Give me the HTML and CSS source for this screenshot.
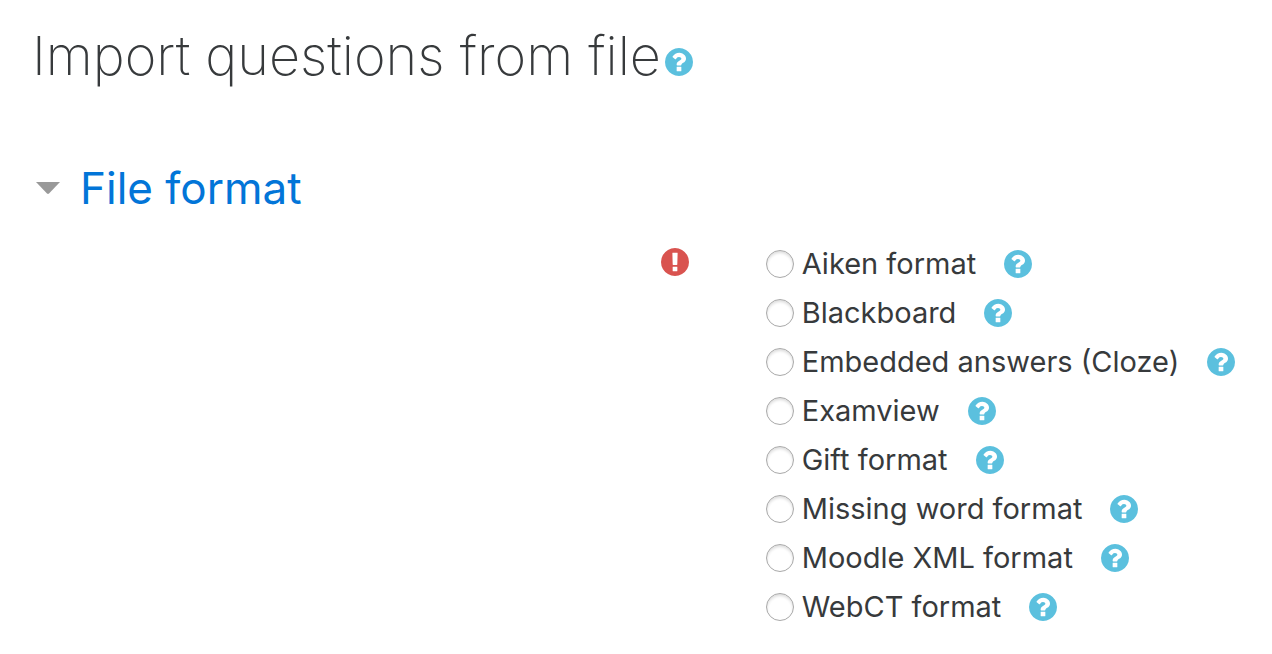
FILE: index.html
```html
<!DOCTYPE html>
<html lang="en">
<head>
    <meta charset="UTF-8">
    <meta name="viewport" content="width=device-width, initial-scale=1.0">
    <title>Import questions from file</title>
    <link rel="stylesheet" href="styles.css">
</head>
<body>
    <svg class="sprite" aria-hidden="true">
        <symbol id="icon-help" viewBox="128 128 1536 1536">
            <path d="M1024 1376v-192q0-14-9-23t-23-9h-192q-14 0-23 9t-9 23v192q0 14 9 23t23 9h192q14 0 23-9t9-23zm256-672q0-88-55.5-163t-138.5-116-170-41q-243 0-371 213-15 24 8 42l132 100q7 6 19 6 16 0 25-12 53-68 86-92 34-24 86-24 48 0 85.5 26t37.5 59q0 38-20 61t-68 45q-63 28-115.5 86.5t-52.5 125.5v36q0 14 9 23t23 9h192q14 0 23-9t9-23q0-19 21.5-49.5t54.5-49.5q32-18 49-28.5t46-35 44.5-48 28-60.5 12.5-81zm384 192q0 209-103 385.5t-279.5 279.5-385.5 103-385.5-103-279.5-279.5-103-385.5 103-385.5 279.5-279.5 385.5-103 385.5 103 279.5 279.5 103 385.5z"/>
        </symbol>
    </svg>

    <header class="page-header">
        <h1>Import questions from file</h1>
        <button type="button" class="help" aria-label="Help with importing questions"><svg><use href="#icon-help"/></svg></button>
    </header>

    <form>
        <h2 class="section-title">
            <svg class="caret" viewBox="0 0 24 12" aria-hidden="true"><path d="M0 0h24L13 11.500q-1 .8-2 0z"/></svg>
            <a href="#file-format">File format</a>
        </h2>

        <div class="form-row" id="file-format">
            <div class="required">
                <svg viewBox="128 128 1536 1536" role="img" aria-label="Required"><path d="M896 128q209 0 385.5 103t279.5 279.5 103 385.5-103 385.5-279.5 279.5-385.5 103-385.5-103-279.5-279.5-103-385.5 103-385.5 279.5-279.5 385.5-103zm128 1247v-190q0-14-9-23.5t-22-9.5h-192q-13 0-23 10t-10 23v190q0 13 10 23t23 10h192q13 0 22-9.5t9-23.5zm-2-344l18-621q0-12-10-18-10-8-24-8h-220q-14 0-24 8-10 6-10 18l17 621q0 10 10 17.500t24 7.500h185q14 0 23.500-7.500t10.500-17.500z"/></svg>
            </div>
            <div class="options" role="radiogroup" aria-label="File format">
                <div class="option">
                    <label><input type="radio" name="format" value="aiken">Aiken format</label>
                    <button type="button" class="help" aria-label="Help with Aiken format"><svg><use href="#icon-help"/></svg></button>
                </div>
                <div class="option">
                    <label><input type="radio" name="format" value="blackboard">Blackboard</label>
                    <button type="button" class="help" aria-label="Help with Blackboard"><svg><use href="#icon-help"/></svg></button>
                </div>
                <div class="option">
                    <label><input type="radio" name="format" value="cloze">Embedded answers (Cloze)</label>
                    <button type="button" class="help" aria-label="Help with Embedded answers (Cloze)"><svg><use href="#icon-help"/></svg></button>
                </div>
                <div class="option">
                    <label><input type="radio" name="format" value="examview">Examview</label>
                    <button type="button" class="help" aria-label="Help with Examview"><svg><use href="#icon-help"/></svg></button>
                </div>
                <div class="option">
                    <label><input type="radio" name="format" value="gift">Gift format</label>
                    <button type="button" class="help" aria-label="Help with Gift format"><svg><use href="#icon-help"/></svg></button>
                </div>
                <div class="option">
                    <label><input type="radio" name="format" value="missingword">Missing word format</label>
                    <button type="button" class="help" aria-label="Help with Missing word format"><svg><use href="#icon-help"/></svg></button>
                </div>
                <div class="option">
                    <label><input type="radio" name="format" value="xml">Moodle XML format</label>
                    <button type="button" class="help" aria-label="Help with Moodle XML format"><svg><use href="#icon-help"/></svg></button>
                </div>
                <div class="option">
                    <label><input type="radio" name="format" value="webct">WebCT format</label>
                    <button type="button" class="help" aria-label="Help with WebCT format"><svg><use href="#icon-help"/></svg></button>
                </div>
            </div>
        </div>
    </form>
</body>
</html>
```
FILE: styles.css
```css
* {
    box-sizing: border-box;
}
body {
    margin: 0;
    padding: 20px 32px;
    font-family: Inter, "Liberation Sans", sans-serif;
    font-size: 29px;
    color: #373a3c;
    background: #fff;
}
.sprite {
    display: none;
}
.page-header {
    display: flex;
    align-items: center;
    gap: 4px;
}
h1 {
    margin: 0;
    font-size: 54px;
    font-weight: 200;
    line-height: 72px;
}
.help {
    flex: none;
    width: 28px;
    height: 28px;
    padding: 0;
    border: none;
    background: none;
    color: #5bc0de;
    cursor: pointer;
}
.help svg,
.required svg {
    display: block;
    width: 28px;
    height: 28px;
    fill: currentColor;
}
.page-header .help {
    margin-top: 12px;
}
.section-title {
    display: flex;
    align-items: center;
    gap: 20px;
    margin: 68px 0 23px;
    padding-left: 4px;
    font-size: 44px;
    font-weight: 400;
    line-height: 56px;
}
.section-title a {
    color: #0275d8;
    text-decoration: none;
}
.caret {
    width: 24px;
    height: 12px;
    fill: #999;
}
.form-row {
    display: grid;
    grid-template-columns: 18fr 13fr;
    gap: 77px;
}
.required {
    display: flex;
    justify-content: flex-end;
    padding-top: 9px;
    color: #d9534f;
}
.option {
    display: flex;
    align-items: center;
    gap: 28px;
    height: 49px;
    white-space: nowrap;
}
.option label {
    display: flex;
    align-items: center;
    gap: 8px;
}
input[type="radio"] {
    appearance: none;
    width: 28px;
    height: 28px;
    margin: 0;
    border: 1px solid #a9a9a9;
    border-radius: 50%;
    background: #fff;
    box-shadow: inset 0 2px 3px #ddd;
}
input[type="radio"]:checked {
    border: 8px solid #0275d8;
}
```
